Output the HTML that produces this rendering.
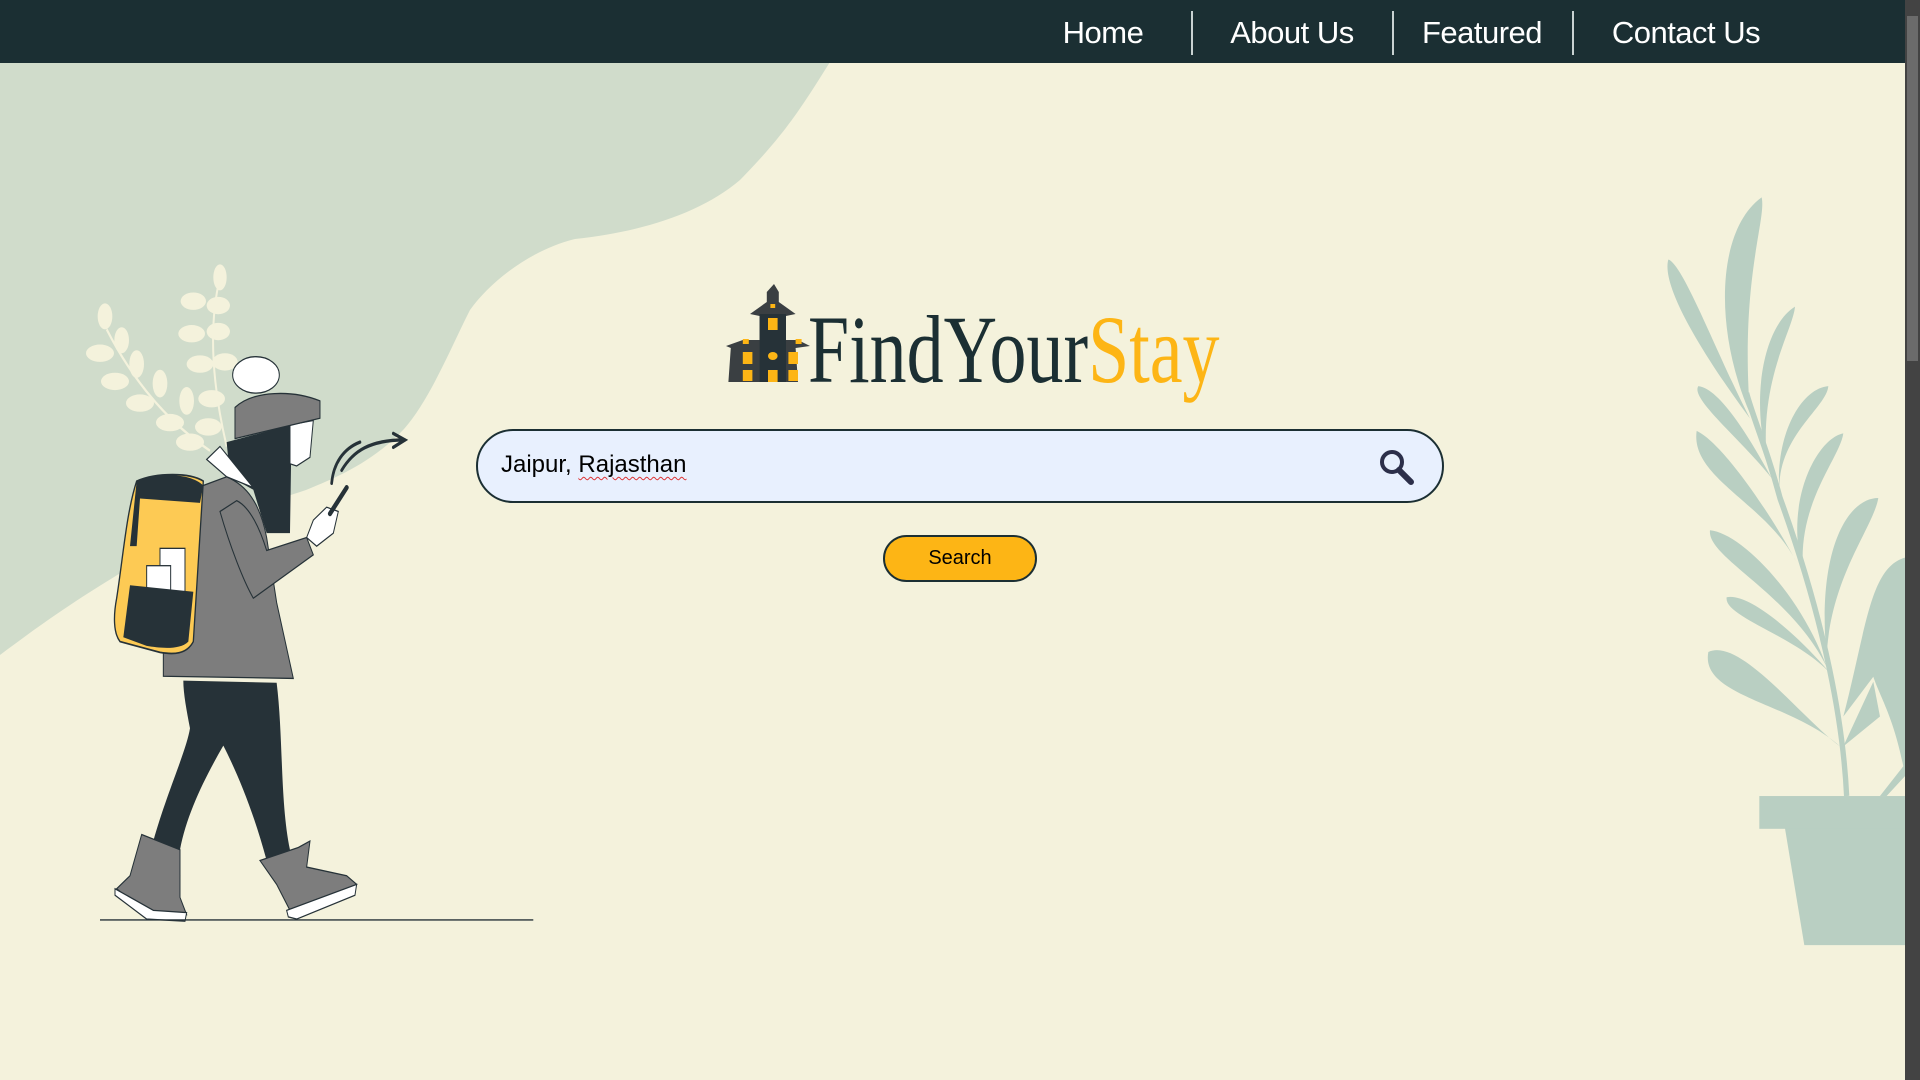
<!DOCTYPE html>
<html><head><meta charset="utf-8"><style>
html,body{margin:0;padding:0;width:1920px;height:1080px;overflow:hidden;background:#f4f2dc;font-family:"Liberation Sans",sans-serif}
#nav{position:absolute;left:0;top:0;width:1905px;height:63px;background:#1b2f33}
.ni{position:absolute;top:0;height:63px;line-height:66px;color:#fff;font-size:31px;transform:translateX(-50%);white-space:nowrap;letter-spacing:-0.5px}
.sep{position:absolute;top:11px;width:1.5px;height:44px;background:#c9d2d2}
#sb{position:absolute;left:1905px;top:0;width:15px;height:1080px;background:#434343}
#thumb{position:absolute;left:1907px;top:16px;width:11px;height:345px;background:#6b6b6b}
#logo{position:absolute;left:808px;top:300px;font-family:"Liberation Serif",serif;font-size:96px;line-height:100px;color:#1b2f33;transform:scaleX(0.77);transform-origin:left top;white-space:nowrap}
#logo span{color:#fdb515}
#box{position:absolute;left:476px;top:429px;width:964px;height:70px;border:2.5px solid #1b2f33;border-radius:40px;background:#e8f0fe}
#box .t{position:absolute;left:23px;top:20px;font-size:24px;color:#000}
#box .t u{text-decoration:underline wavy #d33;text-underline-offset:4px;text-decoration-thickness:1px}
#btn{position:absolute;left:883px;top:535px;width:150px;height:43px;border:2px solid #1b2f33;border-radius:25px;background:#fdb515;text-align:center;line-height:43px;font-size:20px;color:#000}
</style></head><body>
<svg width="1920" height="1080" style="position:absolute;left:0;top:0">
<path d="M0,62 L830,62 C800,110 784,135 740,180 C700,214 640,232 575,239 C530,250 490,282 470,310 C453,343 430,400 404,429 C370,465 330,480 306,490 C260,505 196,527 150,555 C110,580 73,600 0,655 Z" fill="#d0dccb"/>
<g transform="translate(80,260) scale(0.3333,0.4336)" >
 <g fill="#f4f2dc">
  <ellipse cx="75" cy="130" rx="22" ry="30"/><ellipse cx="125" cy="185" rx="22" ry="30"/><ellipse cx="60" cy="215" rx="42" ry="20"/><ellipse cx="170" cy="240" rx="22" ry="32"/><ellipse cx="105" cy="280" rx="42" ry="20"/><ellipse cx="240" cy="285" rx="22" ry="32"/><ellipse cx="180" cy="330" rx="42" ry="20"/><ellipse cx="270" cy="375" rx="42" ry="20"/><ellipse cx="320" cy="325" rx="22" ry="32"/><ellipse cx="330" cy="420" rx="42" ry="20"/>
  <ellipse cx="420" cy="40" rx="20" ry="30"/><ellipse cx="340" cy="95" rx="38" ry="20"/><ellipse cx="415" cy="105" rx="35" ry="20"/><ellipse cx="335" cy="170" rx="40" ry="20"/><ellipse cx="415" cy="165" rx="35" ry="20"/><ellipse cx="360" cy="240" rx="40" ry="20"/><ellipse cx="435" cy="235" rx="38" ry="20"/><ellipse cx="395" cy="320" rx="40" ry="20"/><ellipse cx="385" cy="385" rx="40" ry="20"/>
  <path d="M80,160 Q200,340 390,440 M420,40 Q370,200 440,430" stroke="#f4f2dc" stroke-width="6" fill="none"/>
 </g>
 <path d="M310,970 L590,975 C610,1100 600,1250 630,1360 L560,1385 C520,1270 470,1180 430,1120 C370,1200 320,1280 300,1360 L220,1340 C260,1230 320,1130 330,1080 C320,1040 310,1000 310,970Z" fill="#263238"/>
 <path d="M250,960 L640,965 L590,790 L560,640 C540,560 500,520 440,500 L370,520 L300,640 L250,900Z" fill="#7d7d7d" stroke="#263238" stroke-width="3"/>
 <path d="M440,420 L635,380 L630,630 L560,630 L520,530 L450,500Z" fill="#263238"/>
 <path d="M630,380 L700,370 L690,455 L650,475 L630,470Z" fill="#fff" stroke="#263238" stroke-width="3"/>
 <path d="M465,340 C520,300 640,300 720,325 L720,365 L465,412Z" fill="#7d7d7d" stroke="#263238" stroke-width="3"/>
 <ellipse cx="528" cy="265" rx="70" ry="42" fill="#fff" stroke="#263238" stroke-width="3"/>
 <path d="M380,460 L420,430 L520,525 L440,500Z" fill="#fff" stroke="#263238" stroke-width="3"/>
 <path d="M420,580 C450,660 490,740 520,780 L700,680 L680,640 L560,670 C540,620 510,570 470,555Z" fill="#7d7d7d" stroke="#263238" stroke-width="3"/>
 <path d="M680,640 L700,600 L740,570 L775,580 L760,630 L710,660Z" fill="#fff" stroke="#263238" stroke-width="3"/>
 <path d="M750,585 L800,525" stroke="#263238" stroke-width="12" stroke-linecap="round"/>
 <path d="M755,515 C760,470 790,435 840,420 M785,485 C820,440 870,415 975,415 M940,400 L975,415 L940,432" stroke="#263238" stroke-width="8" fill="none" stroke-linecap="round"/>
 <path d="M170,510 C230,490 330,490 370,510 L340,880 C320,910 280,910 240,905 L120,880 C100,860 100,820 110,780 C130,680 140,580 170,510Z" fill="#fdca54" stroke="#263238" stroke-width="4"/>
 <path d="M170,510 C230,490 330,490 370,520 L360,560 L180,550 L170,660 L150,660Z" fill="#263238"/>
 <rect x="240" y="665" width="75" height="100" fill="#fff" stroke="#263238" stroke-width="3"/>
 <rect x="200" y="705" width="72" height="60" fill="#fff" stroke="#263238" stroke-width="3"/>
 <path d="M150,750 L340,765 L325,880 C300,900 240,895 200,890 L130,870Z" fill="#263238"/>
 <path d="M185,1325 L300,1360 L300,1470 L320,1510 L220,1520 L110,1450 L150,1420Z" fill="#7d7d7d" stroke="#263238" stroke-width="3"/>
 <path d="M105,1450 L220,1500 L320,1505 L315,1525 L200,1520 L105,1465Z" fill="#fff" stroke="#263238" stroke-width="3"/>
 <path d="M540,1385 L655,1355 L690,1340 L680,1400 L800,1420 L830,1440 L700,1490 L630,1500 L590,1440Z" fill="#7d7d7d" stroke="#263238" stroke-width="3"/>
 <path d="M620,1500 L830,1440 L825,1465 L650,1520 L625,1515Z" fill="#fff" stroke="#263238" stroke-width="3"/>
 <path d="M60,1522 L1360,1522" stroke="#263238" stroke-width="3"/>
</g>
<g transform="translate(1640,180) scale(0.3333,0.4968)" fill="#b9cfc2">
 <path d="M330,470 C220,300 230,100 365,35 C380,80 300,200 330,470Z"/>
 <path d="M330,480 C220,380 60,220 85,160 C130,170 230,350 330,480Z"/>
 <path d="M380,560 C330,420 380,290 465,255 C460,300 360,400 380,560Z"/>
 <path d="M395,600 C300,520 150,440 175,415 C240,420 330,520 395,600Z"/>
 <path d="M420,640 C400,520 480,420 565,415 C560,460 400,520 420,640Z"/>
 <path d="M470,770 C380,650 150,600 170,505 C250,530 400,680 470,770Z"/>
 <path d="M490,790 C430,650 530,520 610,510 C600,560 470,650 490,790Z"/>
 <path d="M560,980 C450,830 200,760 210,705 C300,710 480,830 560,980Z"/>
 <path d="M560,960 C530,750 620,640 715,640 C700,700 570,800 560,960Z"/>
 <path d="M580,1000 C480,920 250,880 260,840 C330,830 480,920 580,1000Z"/>
 <path d="M600,1140 C450,1050 180,1040 205,950 C300,920 480,1080 600,1140Z"/>
 <path d="M610,1080 C680,900 690,780 795,760 L795,1200 L740,1240 L720,1240 L790,1180 C760,1080 720,1040 700,1000 Z"/>
 <path d="M610,1140 L720,1080 L700,1010 Z"/>
 <path d="M620,1240 C610,1100 560,900 420,640 C380,540 340,480 320,430" stroke="#b9cfc2" stroke-width="16" fill="none"/>
 <rect x="358" y="1240" width="437" height="66"/>
 <path d="M435,1305 L795,1305 L795,1540 L493,1540Z"/>
</g>
<g transform="translate(726,284) scale(1.2,1)">
 <path d="M40,0 L44,8 L44,18 L58,30 L50,32 L50,56 L60,56 L70,62 L58,64 L60,98 L2,98 L4,64 L0,62 L14,56 L28,56 L28,32 L20,30 L34,18 L34,8Z" fill="#3a3f42"/>
 <rect x="28" y="30" width="22" height="68" fill="#263238"/>
 <g fill="#fdb515"><rect x="35" y="34" width="8" height="12"/><rect x="14" y="68" width="8" height="12"/><rect x="52" y="68" width="8" height="12"/><rect x="14" y="86" width="8" height="11"/><rect x="52" y="86" width="8" height="11"/><circle cx="39" cy="72" r="4"/><rect x="35" y="86" width="8" height="12"/><rect x="14" y="55" width="5" height="5"/><rect x="58" y="55" width="5" height="5"/><rect x="37" y="20" width="4" height="4"/></g>
</g>
</svg>
<div id="nav">
 <div class="ni" style="left:1103px">Home</div>
 <div class="sep" style="left:1191px"></div>
 <div class="ni" style="left:1292px">About Us</div>
 <div class="sep" style="left:1392px"></div>
 <div class="ni" style="left:1482px">Featured</div>
 <div class="sep" style="left:1572px"></div>
 <div class="ni" style="left:1686px">Contact Us</div>
</div>
<div id="sb"></div><div id="thumb"></div>
<div id="logo">FindYour<span>Stay</span></div>
<div id="box"><div class="t">Jaipur, <u>Rajasthan</u></div></div>
<svg width="1920" height="1080" style="position:absolute;left:0;top:0;pointer-events:none">
<circle cx="1392" cy="462" r="10" fill="none" stroke="#2c2f4a" stroke-width="4"/>
<path d="M1399,470 L1411,482" stroke="#2c2f4a" stroke-width="6" stroke-linecap="round"/>
</svg>
<div id="btn">Search</div>
</body></html>
